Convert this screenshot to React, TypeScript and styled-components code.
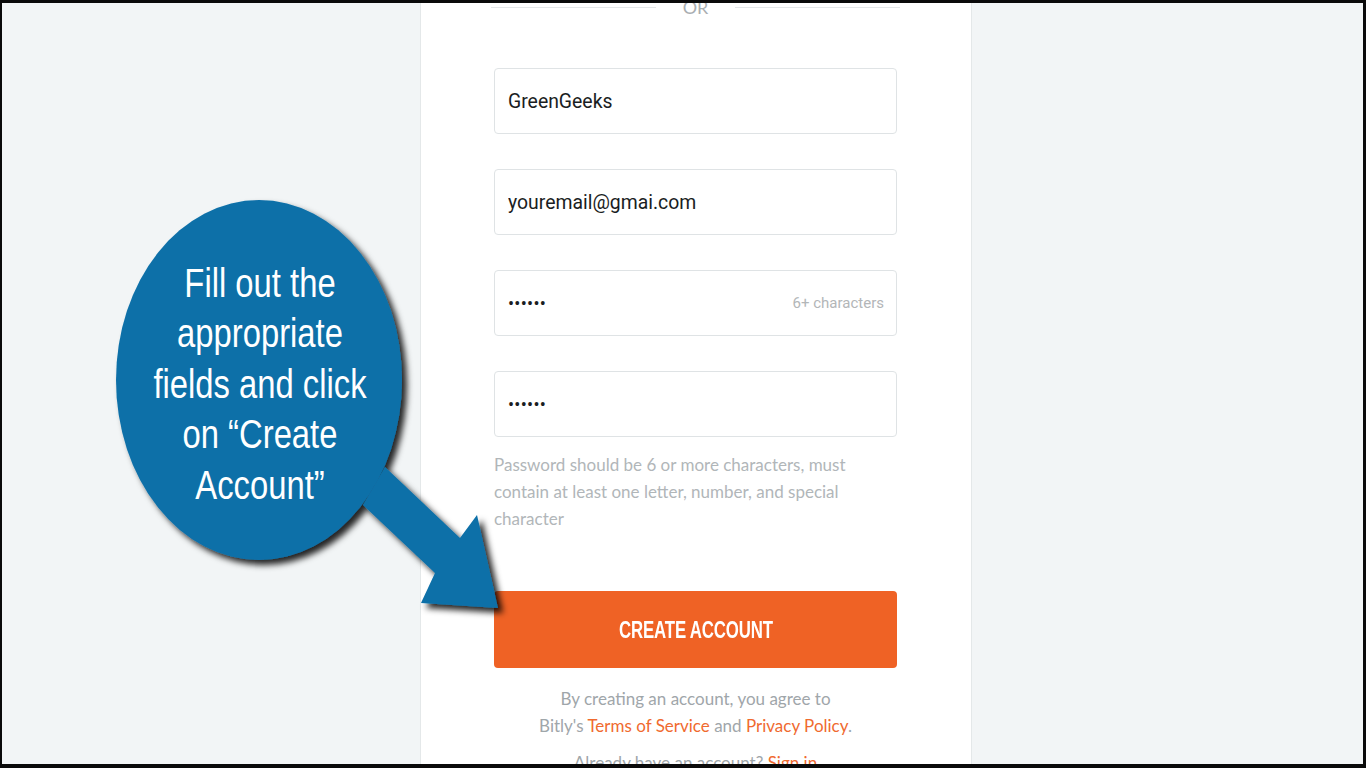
import React from "react";
import styled, { createGlobalStyle } from "styled-components";

const GlobalStyle = createGlobalStyle`
  html, body { margin: 0; padding: 0; background: #0a0a0a; }
  * { box-sizing: border-box; }
`;

const Page = styled.div`
  position: relative;
  width: 1366px;
  height: 768px;
  overflow: hidden;
  border-style: solid;
  border-color: #0a0a0a;
  border-width: 3px 3px 4px 2px;
  background: #f2f5f6;
  display: flex;
  padding-left: 418px;
`;

const Card = styled.main`
  width: 552px;
  height: 100%;
  background: #ffffff;
  border-left: 1px solid #e4e8e9;
  border-right: 1px solid #e4e8e9;
  padding: 0 74px 0 73px;
  display: flex;
  flex-direction: column;
  font-family: Lato, "Open Sans", sans-serif;
  & > * { flex-shrink: 0; }
`;

const Separator = styled.div`
  display: flex;
  align-items: center;
  height: 26px;
  margin: -9px -3px 0;
`;

const SepLine = styled.span`
  flex: 1;
  height: 1px;
  background: #e3e6e8;
`;

const SepText = styled.span`
  padding: 0 27px;
  font-family: Lato, sans-serif;
  font-size: 18px;
  color: #a9aeb1;
`;

const Fields = styled.div`
  display: flex;
  flex-direction: column;
  gap: 35px;
  margin-top: 48px;
`;

const Field = styled.label`
  display: flex;
  align-items: center;
  height: 66px;
  flex-shrink: 0;
  border: 1px solid #dfe3e5;
  border-radius: 4px;
  padding: 0 12px 0 13px;
  background: #fff;
`;

const Input = styled.input<{ $secret?: boolean }>`
  flex: 1;
  min-width: 0;
  border: none;
  outline: none;
  background: transparent;
  padding: 0;
  font-family: Roboto, "Liberation Sans", Arial, sans-serif;
  font-size: ${(p) => (p.$secret ? "18px" : "19.4px")};
  letter-spacing: ${(p) => (p.$secret ? "0.3px" : "0")};
  color: #1a1d22;
`;

const FieldNote = styled.span`
  font-family: Roboto, "Liberation Sans", sans-serif;
  font-size: 15px;
  color: #b3b6b8;
  white-space: nowrap;
`;

const Hint = styled.p`
  margin: 14px 0 0;
  font-size: 17px;
  line-height: 27px;
  color: #b1b6b9;
`;

const SubmitButton = styled.button`
  margin-top: 59px;
  height: 77px;
  width: 100%;
  border: none;
  border-radius: 4px;
  background: #ef6225;
  color: #ffffff;
  cursor: pointer;
  display: flex;
  align-items: center;
  justify-content: center;
  padding: 0;
`;

const ButtonLabel = styled.span`
  display: inline-block;
  font-family: "Liberation Sans", Arial, sans-serif;
  font-weight: 700;
  font-size: 24px;
  letter-spacing: -0.2px;
  transform: scaleX(0.7);
  white-space: nowrap;
`;

const Terms = styled.p`
  margin: 17px 0 0;
  text-align: center;
  font-size: 17px;
  line-height: 27px;
  color: #9fa6aa;
`;

const Link = styled.a`
  color: #f06a2f;
  text-decoration: none;
`;

const Bottom = styled.p`
  margin: 10px 0 0;
  text-align: center;
  font-size: 17px;
  line-height: 27px;
  color: #9fa6aa;
`;

const Callout = styled.svg`
  position: absolute;
  left: -2px;
  top: -3px;
  width: 1366px;
  height: 768px;
  pointer-events: none;
`;

const CalloutText = styled.text`
  font-family: "Liberation Sans", Arial, sans-serif;
  font-size: 40px;
  fill: #ffffff;
`;

const lines = ["Fill out the", "appropriate", "fields and click", "on \u201CCreate", "Account\u201D"];

export default function App() {
  return (
    <>
      <GlobalStyle />
      <Page>
        <Card>
          <Separator>
            <SepLine />
            <SepText>OR</SepText>
            <SepLine />
          </Separator>
          <Fields>
            <Field>
              <Input value="GreenGeeks" readOnly />
            </Field>
            <Field>
              <Input value="youremail@gmai.com" readOnly />
            </Field>
            <Field>
              <Input $secret value={"\u2022\u2022\u2022\u2022\u2022\u2022"} readOnly />
              <FieldNote>6+ characters</FieldNote>
            </Field>
            <Field>
              <Input $secret value={"\u2022\u2022\u2022\u2022\u2022\u2022"} readOnly />
            </Field>
          </Fields>
          <Hint>
            Password should be 6 or more characters, must contain at least one letter, number, and special character
          </Hint>
          <SubmitButton>
            <ButtonLabel>CREATE ACCOUNT</ButtonLabel>
          </SubmitButton>
          <Terms>
            By creating an account, you agree to
            <br />
            Bitly's <Link href="#">Terms of Service</Link> and <Link href="#">Privacy Policy</Link>.
          </Terms>
          <Bottom>
            Already have an account? <Link href="#">Sign in</Link>
          </Bottom>
        </Card>
        <Callout viewBox="0 0 1366 768">
          <defs>
            <filter id="shadow" x="-20%" y="-20%" width="140%" height="140%">
              <feDropShadow dx="5" dy="5" stdDeviation="3" floodColor="#000" floodOpacity="0.85" />
            </filter>
          </defs>
          <g filter="url(#shadow)" fill="#0b6fa8">
            <ellipse cx="259" cy="380" rx="143" ry="180" />
            <polygon points="385,467 460,538 477,515 498,608 421,603 435,573 363,505" />
          </g>
          <g transform="translate(260 0) scale(0.82 1)">
            {lines.map((l, i) => (
              <CalloutText key={i} x="0" y={297 + i * 50.5} textAnchor="middle">
                {l}
              </CalloutText>
            ))}
          </g>
        </Callout>
      </Page>
    </>
  );
}
